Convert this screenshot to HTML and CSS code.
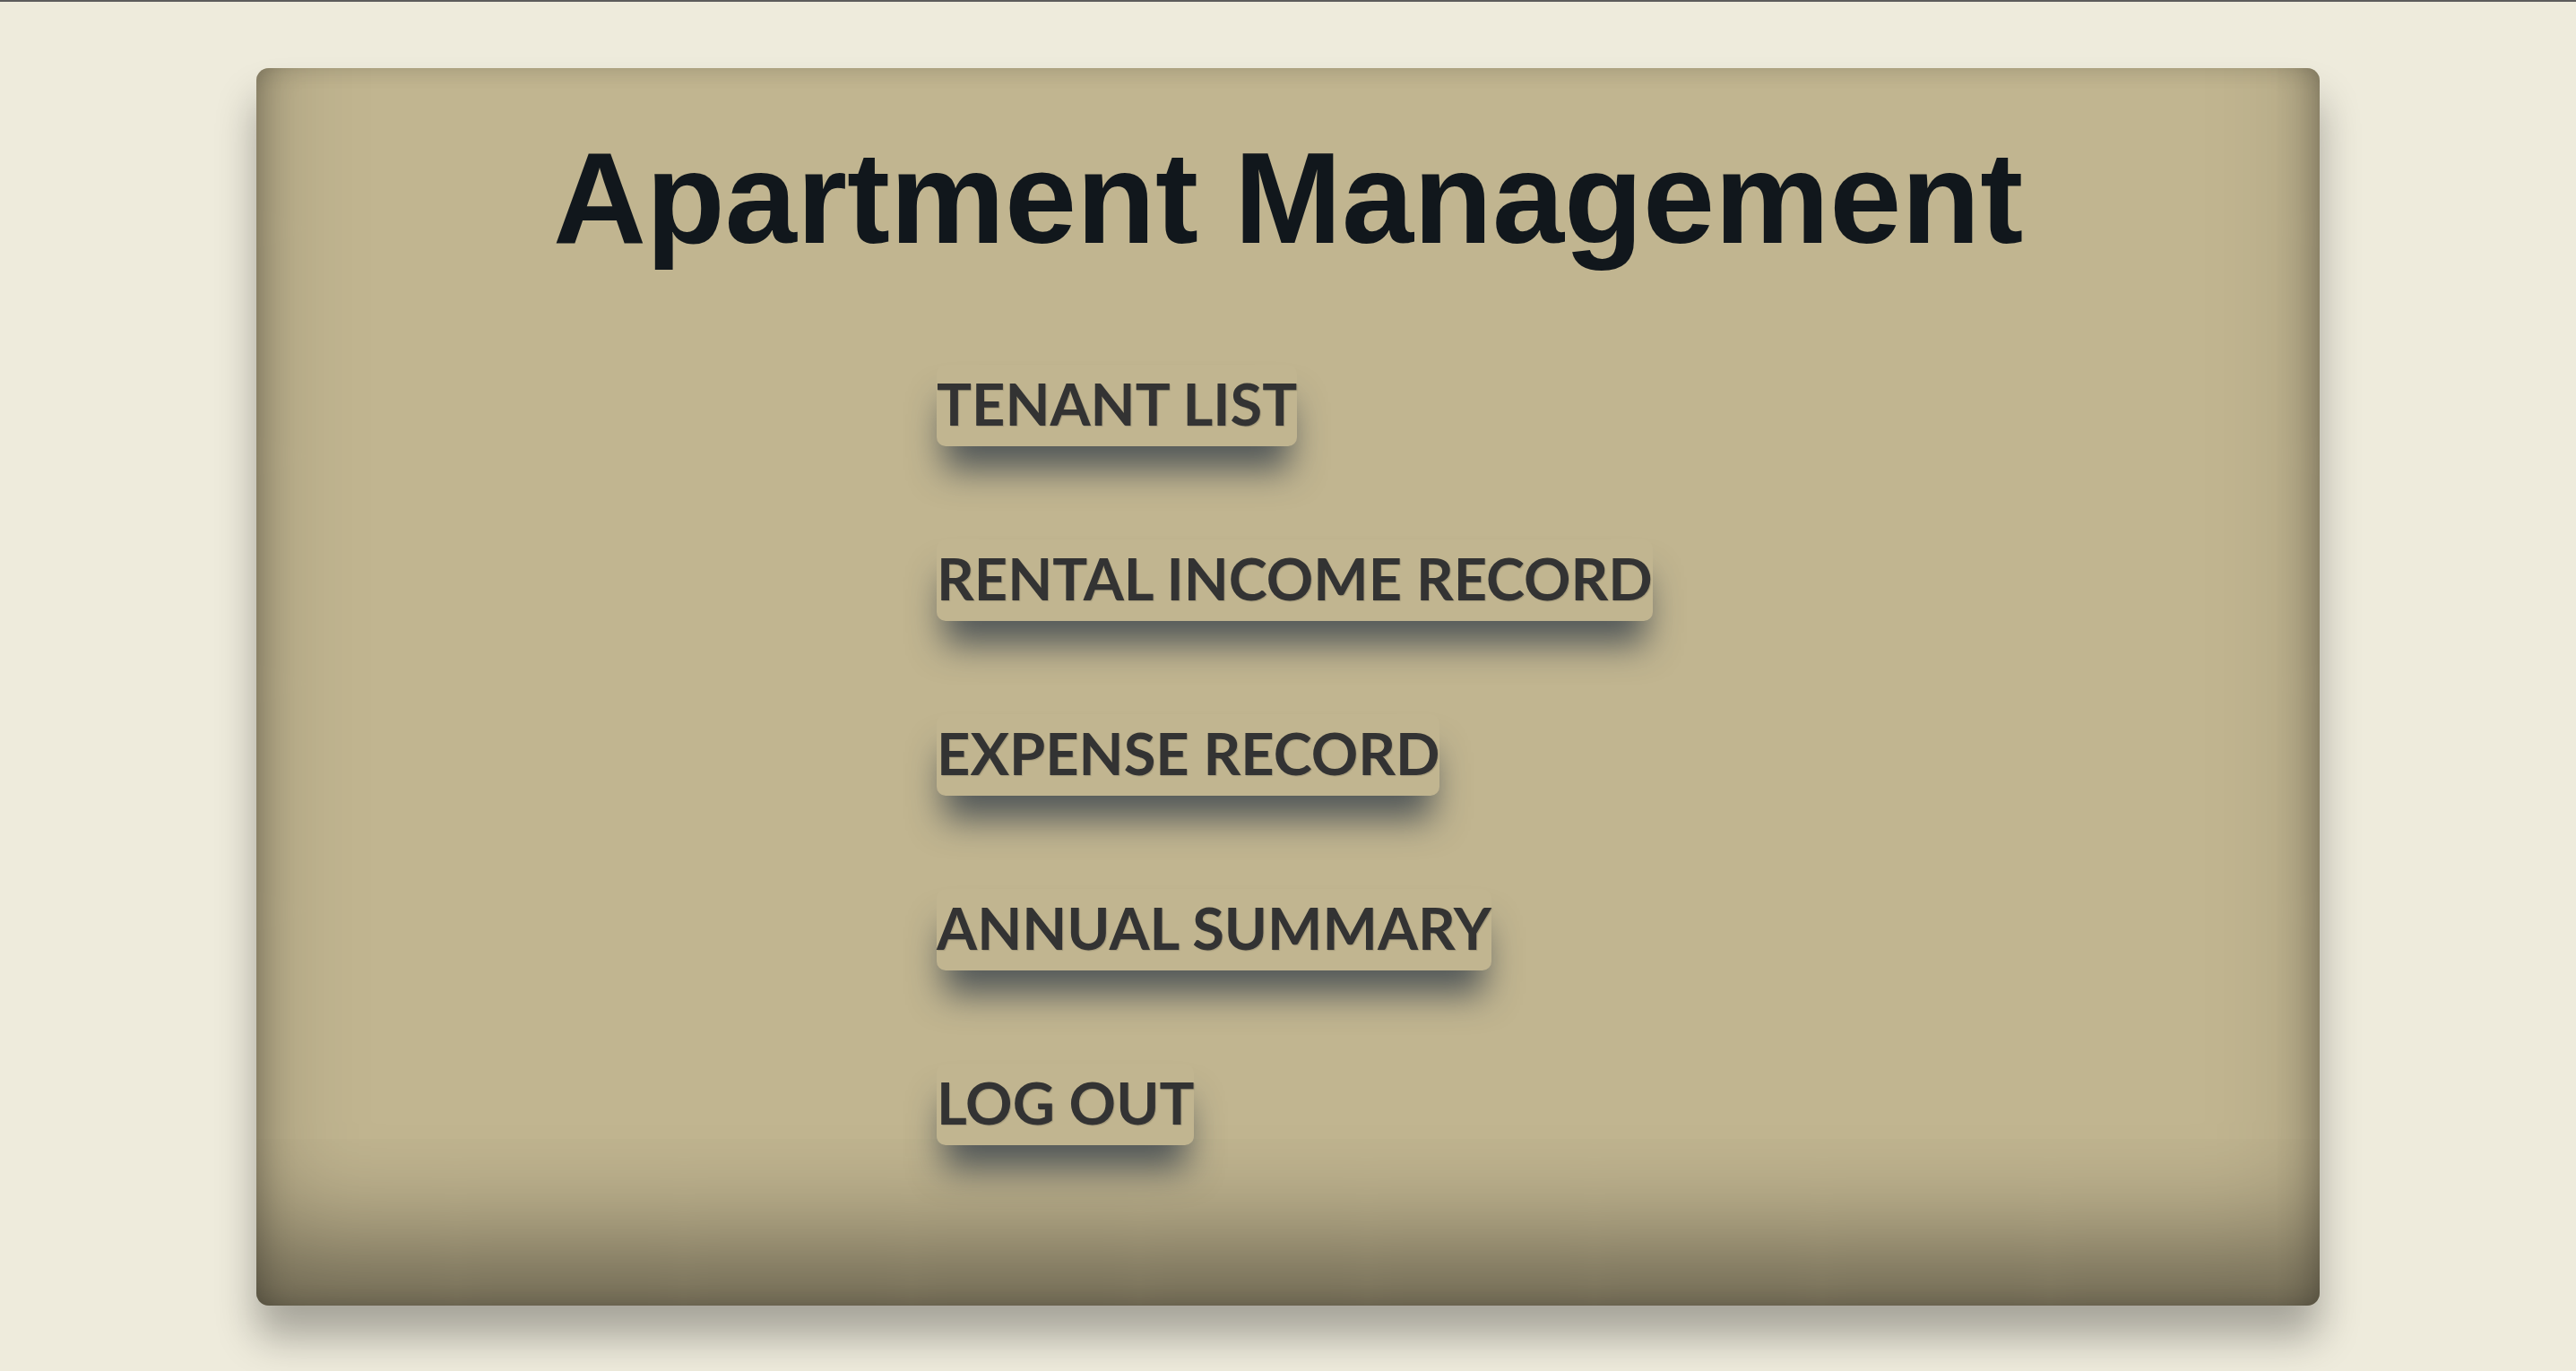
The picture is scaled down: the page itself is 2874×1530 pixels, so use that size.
FILE: index.html
```html
<!DOCTYPE html>
<html lang="en">
<head>
    <meta charset="UTF-8">
    <title>Apartment Management</title>
    <link rel="stylesheet" href="styles.css">
</head>
<body>
    <div class="panel">
        <h1>Apartment Management</h1>

        <nav class="menu">
            <a href="#" class="menu-btn">TENANT LIST</a>
            <a href="#" class="menu-btn">RENTAL INCOME RECORD</a>
            <a href="#" class="menu-btn">EXPENSE RECORD</a>
            <a href="#" class="menu-btn">ANNUAL SUMMARY</a>
            <a href="#" class="menu-btn">LOG OUT</a>
        </nav>
    </div>
</body>
</html>
```

FILE: styles.css
```css
/* Page */
body {
    margin: 0;
    height: 1528px;
    overflow: hidden;
    background-color: #eeebdc;
    border-top: 2px solid #5c5c5c;
    font-family: "Liberation Sans", Arial, sans-serif;
}

/* Main panel */
.panel {
    box-sizing: border-box;
    width: 2302px;
    height: 1381px;
    margin: 74px auto 0;
    background-color: #c1b590;
    border-radius: 14px;
    box-shadow:
        inset 0 -100px 140px -40px rgba(0, 0, 0, 0.5),
        inset 20px 0 40px -20px rgba(0, 0, 0, 0.32),
        inset -20px 0 40px -20px rgba(0, 0, 0, 0.32),
        0 35px 45px rgba(0, 0, 0, 0.3);
    overflow: hidden;
}

h1 {
    margin: 74px 0 0;
    font-size: 144px;
    line-height: 144px;
    font-weight: bold;
    color: #11171c;
    text-align: center;
}

/* Menu buttons */
.menu {
    display: flex;
    flex-direction: column;
    align-items: flex-start;
    gap: 104px;
    margin-top: 113px;
    padding-left: 759px;
}

.menu-btn {
    display: block;
    height: 91px;
    line-height: 86px;
    font-family: "Lato", "Open Sans", sans-serif;
    font-size: 65px;
    font-weight: bold;
    color: #333;
    text-decoration: none;
    background-color: #c1b590;
    border-radius: 10px;
    box-shadow: 0 34px 38px -8px rgba(40, 52, 68, 0.72);
    text-shadow: 1px 1px 1px rgba(0, 0, 0, 0.15);
}
```
